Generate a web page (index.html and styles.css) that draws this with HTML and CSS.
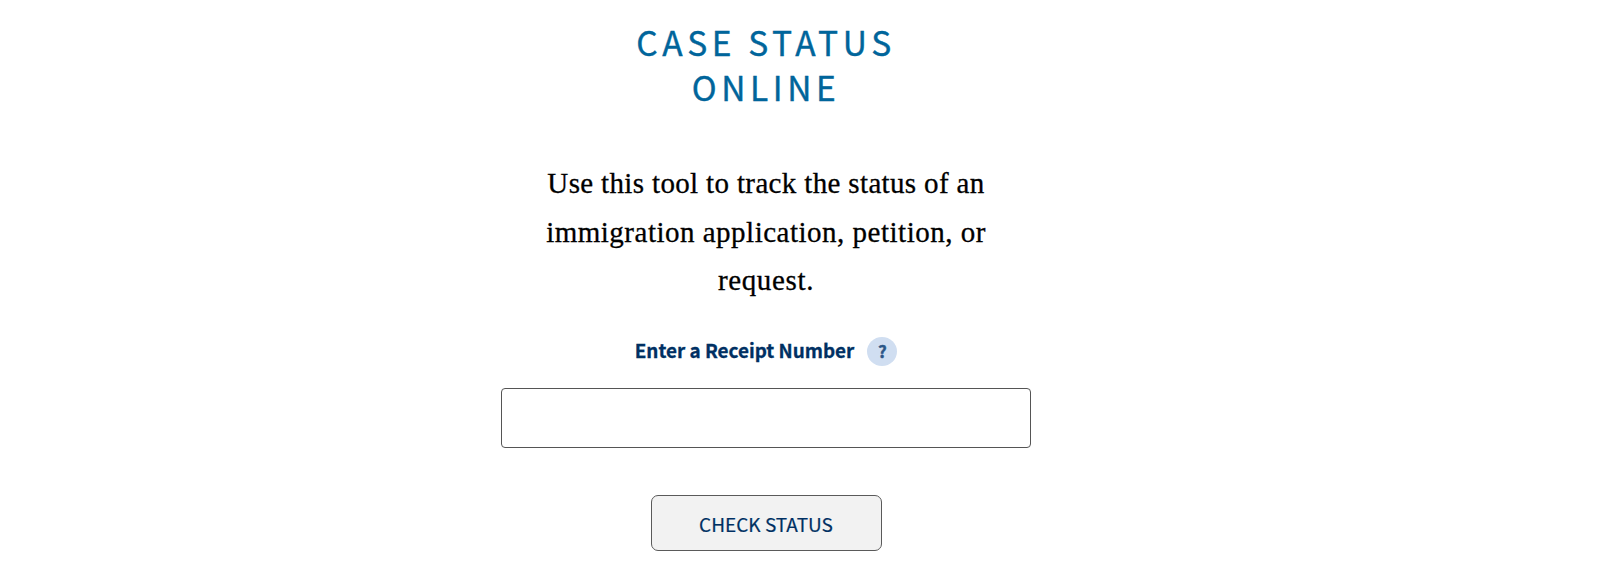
FILE: index.html
```html
<!DOCTYPE html>
<html lang="en">
<head>
<meta charset="utf-8">
<title>Case Status Online</title>
<link rel="stylesheet" href="styles.css">
</head>
<body>
<main class="case-status">
  <h1 class="title">CASE STATUS<br>ONLINE</h1>
  <p class="intro"><span class="intro-first">Use this tool to track the status of an</span><br><span class="intro-second">immigration application, petition, or</span><br><span class="intro-third">request.</span></p>
  <form class="form">
    <div class="label-row">
      <label class="label" for="receipt">Enter a Receipt Number</label>
      <span class="help">?</span>
    </div>
    <input class="receipt" id="receipt" type="text">
    <button class="submit" type="button">CHECK STATUS</button>
  </form>
</main>
</body>
</html>
```
FILE: styles.css
```css
* { box-sizing: border-box; }
body {
  margin: 0;
  background: #fff;
  font-family: "Noto Sans CJK SC", "Noto Sans", sans-serif;
}
.case-status {
  width: 530px;
  margin-left: 501px;
  padding-top: 19px;
  text-align: center;
}
.title {
  margin: 0;
  color: #00659b;
  font-size: 33.5px;
  font-weight: 400;
  line-height: 45px;
  letter-spacing: 4.6px;
  -webkit-text-stroke: 0.4px #00659b;
}
.intro {
  margin: 50px 0 0;
  color: #000;
  font-family: Georgia, "Liberation Serif", serif;
  font-size: 29px;
  line-height: 48.5px;
  white-space: nowrap;
  -webkit-text-stroke: 0.3px #000;
}
.intro-first { letter-spacing: 0.35px; }
.intro-second { letter-spacing: 0.5px; }
.intro-third { letter-spacing: 0.65px; }
.form {
  display: flex;
  flex-direction: column;
  align-items: center;
}
.label-row {
  display: flex;
  align-items: center;
  gap: 13px;
  height: 30px;
  margin-top: 32px;
}
.label {
  padding-bottom: 4px;
  color: #003063;
  font-size: 18.9px;
  font-weight: 700;
  line-height: 26px;
  -webkit-text-stroke: 0.3px #003063;
}
.help {
  width: 30px;
  height: 29px;
  border-radius: 50%;
  background: #d0def1;
  color: #2c5687;
  font-size: 17px;
  font-weight: 700;
  line-height: 28px;
  -webkit-text-stroke: 0.4px #2c5687;
}
.receipt {
  width: 530px;
  height: 60px;
  margin: 21px 0 0;
  padding: 0 16px;
  border: 1px solid #555;
  border-radius: 4px;
  background: #fff;
  font: 19px "Noto Sans CJK SC", sans-serif;
}
.submit {
  width: 231px;
  height: 56px;
  margin: 47px 0 0;
  padding: 1px 0 0;
  border: 1px solid #5a5a5a;
  border-radius: 7px;
  background: #f2f2f2;
  color: #003063;
  font: 19px "Noto Sans CJK SC", sans-serif;
  -webkit-text-stroke: 0.2px #003063;
}
```
